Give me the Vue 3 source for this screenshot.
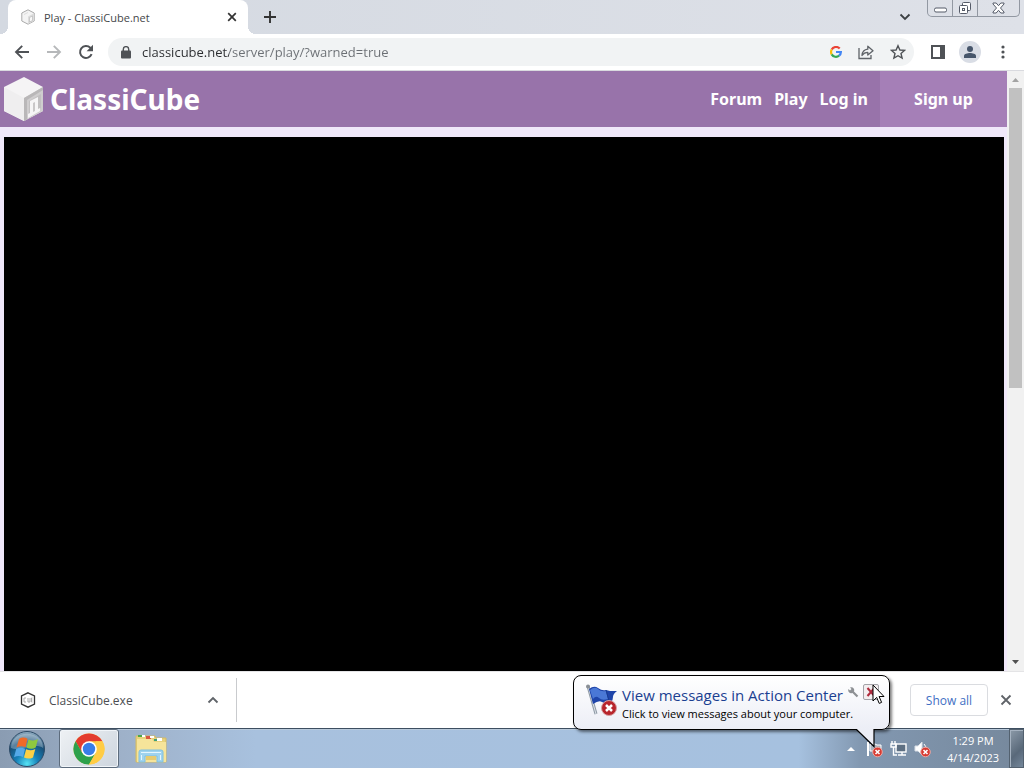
<template>
  <div class="desktop">
    <div class="browser">
      <div class="tab-strip">
        <div class="tab">
          <svg class="tab-icon" width="16" height="16" viewBox="0 0 16 16">
            <path d="M8 .8 14.2 4v8L8 15.2 1.8 12V4z" fill="#f4f4f4" stroke="#aaa" />
            <path d="M8 7.5 14 4.3v7.5l-6 3.2z" fill="#dcdcdc" />
            <path d="M9.5 8.5 12.5 7v4.5L9.5 13z" fill="#f8f8f8" stroke="#bbb" stroke-width=".7" />
            <path d="M4 5.5 8 3.5" stroke="#ddd" />
          </svg>
          <span class="tab-title">Play - ClassiCube.net</span>
          <button class="icon-button tab-close" aria-label="Close tab">
            <svg width="10" height="10" viewBox="0 0 10 10">
              <path d="m1.2 1.2 7.6 7.6m0-7.6-7.6 7.6" stroke="#333" stroke-width="1.7" />
            </svg>
          </button>
        </div>
        <button class="icon-button new-tab" aria-label="New tab">
          <svg width="14" height="14" viewBox="0 0 14 14">
            <path d="M7 1v12M1 7h12" stroke="#333" stroke-width="1.9" />
          </svg>
        </button>
        <button class="icon-button tab-search" aria-label="Search tabs">
          <svg width="12" height="8" viewBox="0 0 12 8">
            <path d="m1.5 1.5 4.5 4.5 4.5-4.5" fill="none" stroke="#3c4043" stroke-width="1.8" />
          </svg>
        </button>
        <div class="window-controls">
          <button aria-label="Minimize">
            <svg width="13" height="6" viewBox="0 0 13 6">
              <rect x=".5" y="1" width="12" height="4" rx="1.5" fill="#fff" stroke="#555b68" />
            </svg>
          </button>
          <button aria-label="Restore">
            <svg width="14" height="14" viewBox="0 0 14 14" fill="#fff" stroke="#555b68">
              <rect x="4.5" y="1.5" width="8" height="8" rx="1" />
              <rect x="1.5" y="4.5" width="8" height="8" rx="1" />
              <rect x="4.5" y="7.5" width="2" height="2" />
            </svg>
          </button>
          <button class="window-close" aria-label="Close">
            <svg width="13" height="12" viewBox="0 0 13 12">
              <path
                d="M1 1h3.2l2.3 2.7L8.8 1H12v1L8.5 6l3.5 4v1H8.8L6.5 8.3 4.2 11H1v-1l3.5-4L1 2z"
                fill="#fff"
                stroke="#555b68"
              />
            </svg>
          </button>
        </div>
      </div>

      <div class="toolbar">
        <button class="icon-button nav-button" aria-label="Back">
          <svg width="16" height="16" viewBox="0 0 16 16" fill="none" stroke="#4f5256" stroke-width="1.9">
            <path d="M15 8H2M8.2 1.8 2 8l6.2 6.2" />
          </svg>
        </button>
        <button class="icon-button nav-button" aria-label="Forward">
          <svg width="16" height="16" viewBox="0 0 16 16" fill="none" stroke="#b6b8ba" stroke-width="1.9">
            <path d="M1 8h13M7.8 1.8 14 8l-6.2 6.2" />
          </svg>
        </button>
        <button class="icon-button nav-button" aria-label="Reload">
          <svg width="16" height="16" viewBox="0 0 16 16">
            <path d="M13.6 10.2A6 6 0 1 1 12.3 3.7L14 5.4" fill="none" stroke="#4f5256" stroke-width="2" />
            <path d="M15 .8v6.4H8.6z" fill="#4f5256" />
          </svg>
        </button>
        <div class="omnibox">
          <svg width="10" height="13" viewBox="0 0 10 13">
            <rect y="4.5" width="10" height="8" rx="1" fill="#4f5256" />
            <path d="M2.3 5V3.3a2.7 2.7 0 0 1 5.4 0V5" fill="none" stroke="#4f5256" stroke-width="1.4" />
          </svg>
          <input v-model="url" class="url" type="text" aria-label="Address" spellcheck="false" />
          <button class="icon-button" aria-label="Google">
            <svg width="12" height="12" viewBox="0 0 12 12" fill="none" stroke-width="2.2">
              <path d="M9.7 2.6A4.9 4.9 0 0 0 1.7 3.6" stroke="#ea4335" />
              <path d="M1.7 3.6a4.9 4.9 0 0 0 0 4.8" stroke="#fbbc05" />
              <path d="M1.7 8.4a4.9 4.9 0 0 0 7.4 1.3" stroke="#34a853" />
              <path d="M6 6h4.9a4.9 4.9 0 0 1-1.8 3.7" stroke="#4285f4" />
            </svg>
          </button>
          <button class="icon-button" aria-label="Share this page">
            <svg width="16" height="16" viewBox="0 0 16 16" fill="none" stroke="#5f6368" stroke-width="1.3">
              <path d="M1 4v10.5h12V11" />
              <path d="M4 11.5C4.3 7.5 6.5 5.5 9.8 5.2v-3L15 6.7 9.800 11V8.300C7.200 8.300 5.500 9.200 4 11.500z" stroke-linejoin="round" />
            </svg>
          </button>
          <button class="icon-button" aria-label="Bookmark this tab">
            <svg width="16" height="16" viewBox="0 0 16 16">
              <path
                d="m8 1.7 1.9 4.3 4.6.4-3.500 3.100 1.100 4.600L8 11.700l-4.100 2.400L5 9.500 1.500 6.400l4.600-.4z"
                fill="none"
                stroke="#4f5256"
                stroke-width="1.4"
              />
            </svg>
          </button>
        </div>
        <button class="icon-button side-panel" aria-label="Side panel">
          <svg width="14" height="14" viewBox="0 0 14 14">
            <rect x="1" y="1" width="12" height="12" fill="none" stroke="#4f5256" stroke-width="2" />
            <path d="M9 1h4v12H9z" fill="#4f5256" />
          </svg>
        </button>
        <button class="icon-button avatar" aria-label="Profile">
          <svg width="12" height="12" viewBox="0 0 12 12" fill="#47566b">
            <circle cx="6" cy="3" r="3" />
            <path d="M0 12V9.8C0 8 3.5 7 6 7s6 1 6 2.8V12z" />
          </svg>
        </button>
        <button class="icon-button menu-button" aria-label="Menu">
          <svg width="4" height="14" viewBox="0 0 4 14" fill="#4f5256">
            <circle cx="2" cy="2" r="1.6" />
            <circle cx="2" cy="7" r="1.6" />
            <circle cx="2" cy="12" r="1.6" />
          </svg>
        </button>
      </div>

      <div class="viewport">
        <div class="page">
          <header class="site-header">
            <a href="#" class="brand">
              <svg width="40" height="46" viewBox="0 0 40 46">
                <path d="M20 1 39 11v24L20 45 0 35V11z" fill="#f5f4f5" />
                <path d="M0 11 20 22v23L0 35z" fill="#efeeef" />
                <path d="M20 22 39 11v24L20 45z" fill="#cfcdce" />
                <path d="m20 22 19-11v3L23 24v19.500l-3 1.500z" fill="#b9b7b8" />
                <path d="m25 25 12-7v14l-12 8z" fill="#c2c0c1" />
                <path d="m26 25 8-4v12l2-1v3l-12 7v-4l2-1z" fill="#f6f5f6" />
                <path d="m29 27 2-1v9l-2 1z" fill="#c9c7c8" />
              </svg>
              <span>ClassiCube</span>
            </a>
            <nav class="site-nav">
              <a v-for="link in links" :key="link" href="#">{{ link }}</a>
            </nav>
            <a href="#" class="sign-up">Sign up</a>
          </header>
          <div class="game"></div>
        </div>
        <div class="scrollbar">
          <svg class="arrow" width="17" height="17" viewBox="0 0 17 17">
            <path d="m5 11 3.5-4 3.5 4z" fill="#a3a3a3" />
          </svg>
          <div class="track"><div class="thumb"></div></div>
          <svg class="arrow" width="17" height="17" viewBox="0 0 17 17">
            <path d="m5 6 3.5 4L12 6z" fill="#505050" />
          </svg>
        </div>
      </div>

      <div class="downloads">
        <div class="download-item">
          <svg width="16" height="16" viewBox="0 0 16 16">
            <path d="M8 .8 14.5 4v8L8 15.200 1.500 12V4z" fill="#fff" stroke="#333" stroke-width="1.3" />
            <path d="M6 6H4v4h2M8 6v4h2V6M12.500 6h-1v4h1M11.500 8h1" fill="none" stroke="#aaa" />
          </svg>
          <span class="file-name">ClassiCube.exe</span>
          <button class="icon-button" aria-label="Download options">
            <svg width="12" height="8" viewBox="0 0 12 8">
              <path d="M1.5 6.5 6 2l4.5 4.5" fill="none" stroke="#5f6368" stroke-width="1.8" />
            </svg>
          </button>
        </div>
        <button class="show-all">Show all</button>
        <button class="icon-button close-downloads" aria-label="Close downloads">
          <svg width="12" height="12" viewBox="0 0 12 12">
            <path d="m1.5 1.5 9 9m0-9-9 9" stroke="#5f6368" stroke-width="1.8" />
          </svg>
        </button>
      </div>
    </div>

    <div class="taskbar">
      <button class="start" aria-label="Start">
        <svg width="38" height="38" viewBox="0 0 38 38">
          <defs>
            <radialGradient id="orb" cx=".5" cy=".92" r=".9">
              <stop offset="0" stop-color="#55e3f4" />
              <stop offset=".35" stop-color="#1681b9" />
              <stop offset=".7" stop-color="#195078" />
              <stop offset="1" stop-color="#8eabc0" />
            </radialGradient>
          </defs>
          <circle cx="19" cy="19" r="17.5" fill="url(#orb)" stroke="#2c4a66" />
          <path d="M3 18C3-1 35-1 35 18 27 12 11 22 3 18z" fill="#fff" opacity=".28" />
          <path d="M11 9c3-2 6-1.700 8.500-.3l-2 8.500c-3-1.400-6-1.300-9 .4z" fill="#ef6a28" />
          <path d="M20.500 9.500c3 1.500 6 1.300 9.500-.5l-2.300 8.500c-3 1.800-6 1.500-9.200 0z" fill="#8fc83e" />
          <path d="M8.200 19c3-1.700 6-1.600 8.900-.2l-2.100 8.200c-3-1.500-6-1.400-9 .3z" fill="#54a9e8" />
          <path d="M18.100 19.300c3.200 1.500 6.200 1.400 9.200-.2l-2.300 8.300c-3 1.600-6 1.500-9 .1z" fill="#fcd045" />
        </svg>
      </button>
      <button class="task active" aria-label="Google Chrome">
        <svg width="32" height="32" viewBox="0 0 32 32">
          <circle cx="16" cy="16" r="15.5" fill="#fc4" />
          <path d="M2.6 8.2A15.5 15.5 0 0 1 29.4 8.2H16L9.2 20z" fill="#e33b2e" />
          <path d="M2.6 8.2A15.5 15.5 0 0 0 16 31.5l6.8-11.700H9.200z" fill="#2da14c" />
          <path d="M29.4 8.2A15.5 15.5 0 0 1 16 31.5l6.800-11.700V8.200z" fill="#fc4" />
          <circle cx="16" cy="16" r="7.8" fill="#fff" />
          <circle cx="16" cy="16" r="6.2" fill="#387de8" />
        </svg>
      </button>
      <button class="task" aria-label="Windows Explorer">
        <svg width="32" height="30" viewBox="0 0 32 30">
          <path d="M1 2h19l1 2h10v24H1z" fill="#e8d27c" stroke="#d3bb66" />
          <path d="M3 1h5v2H3z" fill="#4da747" />
          <path d="M11 2h5v3h-5z" fill="#da5641" />
          <path d="M19 5h4v2h-4z" fill="#3fa078" />
          <path d="M7 1h3v2H7zM15 2h4v2h-4zM22 4h5v3h-5z" fill="#fff" />
          <path d="M2 5h15l2 3h12v20H2z" fill="#f6e49a" />
          <path d="M4 28V18q0-2 2-2h20q2 0 2 2v10h-6v-6H10v6z" fill="#9fd3ee" stroke="#7fbfe0" />
          <path d="M6 18h20v1H6zM6 21h1v5H6zM25 21h1v5h-1z" fill="#e4f6fd" />
          <path d="M11 22h10v4H11z" fill="#e6cb70" />
        </svg>
      </button>
      <div class="tray">
        <button class="tray-button" aria-label="Show hidden icons">
          <svg width="8" height="5" viewBox="0 0 8 5"><path d="m0 5 4-4 4 4z" fill="#fff" /></svg>
        </button>
        <button class="tray-button" aria-label="Action Center">
          <svg width="18" height="18" viewBox="0 0 18 18">
            <path d="M2 2v14" stroke="#fff" stroke-width="2" />
            <path d="M4 4h5l2 1h4v6H4z" fill="#a9b3bf" stroke="#fff" />
            <circle cx="11.5" cy="12" r="4.8" fill="#d83b32" stroke="#eca9a4" />
            <path d="m9.500 10 4 4m0-4-4 4" stroke="#fff" stroke-width="1.6" />
          </svg>
        </button>
        <button class="tray-button" aria-label="Network">
          <svg width="18" height="18" viewBox="0 0 18 18" fill="none" stroke="#fff" stroke-width="1.4">
            <rect x="6" y="4" width="10" height="8" fill="#5d6f82" />
            <path d="M8 15h8M12 12v3M2 1v3M5 1v3M1 4h5v3H1zM3.500 7v8H7" />
          </svg>
        </button>
        <button class="tray-button" aria-label="Volume">
          <svg width="18" height="18" viewBox="0 0 18 18">
            <path d="M1 6h3l4-4v13l-4-4H1z" fill="#fff" stroke="#d8dee6" />
            <path d="M10 4q2 2 2 5" fill="none" stroke="#fff" />
            <circle cx="11.5" cy="12" r="4.8" fill="#d83b32" stroke="#eca9a4" />
            <path d="m9.500 10 4 4m0-4-4 4" stroke="#fff" stroke-width="1.6" />
          </svg>
        </button>
        <div class="clock">
          <span>1:29 PM</span>
          <span>4/14/2023</span>
        </div>
        <button class="show-desktop" aria-label="Show desktop"></button>
      </div>
    </div>

    <div class="balloon">
      <svg class="flag" width="34" height="34" viewBox="0 0 34 34">
        <path d="m2 2 8 28" stroke="#8e99a5" stroke-width="3" />
        <path d="m2 2 8 28" stroke="#dce2e8" />
        <circle cx="2" cy="2.500" r="2" fill="#8a8f95" />
        <path d="M3 5q5-4 9-1t8 2l4 1 7 0q-4 3-4 6t-2 6q-6 1-9-1t-9 2z" fill="#1f45aa" />
        <path d="M4 6q5-4 8-1t8 2l2 8q-6 2-9-1t-6 1z" fill="#4a78d6" />
        <path d="m20 6 3 11" stroke="#183b91" />
        <circle cx="23" cy="24" r="7.5" fill="#b8252c" stroke="#d5a0a3" />
        <path d="m20 21 6 6m0-6-6 6" stroke="#fff" stroke-width="2.5" />
      </svg>
      <div class="balloon-text">
        <a href="#" class="balloon-title">View messages in Action Center</a>
        <span class="balloon-body">Click to view messages about your computer.</span>
      </div>
      <button class="icon-button balloon-options" aria-label="Options">
        <svg width="12" height="12" viewBox="0 0 12 12">
          <path d="M5 5 10.5 10.5" stroke="#8d9094" stroke-width="2.2" />
          <path d="M3 1.5 4.5 3 3 4.5 1.5 3A3 3 0 1 0 3 1.5z" fill="#8d9094" />
        </svg>
      </button>
      <button class="icon-button balloon-close" aria-label="Dismiss">
        <svg width="10" height="10" viewBox="0 0 10 10">
          <path d="m1.5 1 7 8m0-8-7 8" stroke="#b02a3c" stroke-width="2" />
        </svg>
      </button>
      <svg class="balloon-tail" width="22" height="19" viewBox="0 0 22 19">
        <path d="M1 0 19 17V0z" fill="#eceef6" />
        <path d="M1 0 19 17.500V0" fill="none" stroke="#000" stroke-width="1.2" />
      </svg>
      <svg class="cursor" width="13" height="21" viewBox="0 0 13 21">
        <path d="M1 1v16l3.700-3.600 2.500 6 2.400-1-2.500-5.900H12z" fill="#fff" stroke="#000" />
      </svg>
    </div>
  </div>
</template>

<script setup>
import { ref } from 'vue'

const url = ref('classicube.net/server/play/?warned=true')
const links = ['Forum', 'Play', 'Log in']
</script>

<style>
body {
  margin: 0;
  overflow: hidden;
}
</style>

<style scoped>
* {
  box-sizing: border-box;
}

.desktop {
  position: relative;
  display: flex;
  flex-direction: column;
  height: 100vh;
  overflow: hidden;
  font-family: 'Open Sans', 'Noto Sans', sans-serif;
  font-size: 12px;
}

svg {
  display: block;
  flex: none;
}

a {
  text-decoration: none;
}

button {
  font-family: inherit;
}

.icon-button {
  display: flex;
  align-items: center;
  justify-content: center;
  padding: 0;
  border: none;
  background: none;
}

.browser {
  flex: 1;
  min-height: 0;
  display: flex;
  flex-direction: column;
}

.tab-strip {
  display: flex;
  flex: none;
  height: 34px;
  padding: 0 4px 0 8px;
  background: linear-gradient(90deg, #d4d9e1, #dee1e8);
}

.tab {
  position: relative;
  display: flex;
  align-items: center;
  width: 240px;
  padding: 0 10px 0 12px;
  background: #fff;
  border-radius: 8px 8px 0 0;
}

.tab::before,
.tab::after {
  content: '';
  position: absolute;
  bottom: 0;
  width: 8px;
  height: 8px;
}

.tab::before {
  right: 100%;
  background: radial-gradient(circle at 0 0, transparent 8px, #fff 8px);
}

.tab::after {
  left: 100%;
  background: radial-gradient(circle at 100% 0, transparent 8px, #fff 8px);
}

.tab-title {
  flex: 1;
  margin-left: 8px;
  font-size: 11px;
  color: #45474a;
  white-space: nowrap;
}

.tab-close {
  width: 12px;
}

.new-tab {
  width: 14px;
  margin-left: 15px;
}

.tab-search {
  width: 12px;
  margin-left: auto;
}

.window-controls {
  display: flex;
  height: 17px;
  margin-left: 16px;
  border: 1px solid #9298a2;
  border-top: none;
  border-radius: 0 0 5px 5px;
}

.window-controls button {
  display: flex;
  align-items: center;
  justify-content: center;
  width: 25px;
  padding: 0;
  border: none;
  border-right: 1px solid #9298a2;
  background: none;
}

.window-controls button:first-child {
  align-items: flex-end;
  padding-bottom: 3px;
}

.window-controls .window-close {
  width: 41px;
  border-right: none;
}

.toolbar {
  display: flex;
  align-items: center;
  flex: none;
  height: 37px;
  padding: 0 13px 0 14px;
  background: #fff;
  border-bottom: 1px solid #d9dadf;
}

.nav-button {
  width: 16px;
  margin-right: 16px;
}

.omnibox {
  flex: 1;
  display: flex;
  align-items: center;
  gap: 16px;
  height: 28px;
  margin-right: 17px;
  margin-left: -2px;
  padding: 0 8px 0 13px;
  background: #f1f3f4;
  border-radius: 14px;
}

/* host name dark, path grey */
.url {
  flex: 1;
  min-width: 0;
  margin-left: -5px;
  padding: 0;
  border: none;
  outline: none;
  font-family: inherit;
  font-size: 13px;
  color: #303236;
  background: linear-gradient(90deg, #2b2d30 87px, #6b6f74 87px);
  background-clip: text;
  -webkit-background-clip: text;
  -webkit-text-fill-color: transparent;
}

.avatar {
  width: 22px;
  height: 22px;
  margin: 0 20px 0 14px;
  border-radius: 50%;
  background: #d9dde5;
}

.menu-button {
  width: 4px;
  margin-right: 6px;
}

.viewport {
  flex: 1;
  min-height: 0;
  display: flex;
}

.page {
  flex: 1;
  display: flex;
  flex-direction: column;
  gap: 10px;
  background: #f0e8fa;
}

.site-header {
  display: flex;
  align-items: center;
  flex: none;
  height: 56px;
  padding-left: 4px;
  background: #9873aa;
  font-family: 'Noto Sans', sans-serif;
  font-size: 16px;
  font-weight: 700;
}

.site-header a {
  color: #fff;
}

.brand {
  display: flex;
  align-items: center;
  gap: 6px;
  font-size: 28px;
  line-height: 36px;
}

.site-nav {
  display: flex;
  gap: 12px;
  margin-left: auto;
  padding-right: 12px;
}

.sign-up {
  display: flex;
  align-items: center;
  justify-content: center;
  align-self: stretch;
  width: 127px;
  background: #a57fb7;
}

.game {
  flex: 1;
  margin: 0 3px 0 4px;
  background: #000;
}

.scrollbar {
  display: flex;
  flex-direction: column;
  width: 17px;
  background: #f1f1f1;
}

.track {
  flex: 1;
  padding: 0 2px;
}

.thumb {
  height: 53%;
  background: #c1c1c1;
}

.downloads {
  display: flex;
  align-items: center;
  flex: none;
  height: 57px;
  padding-right: 12px;
  background: #fff;
  border-top: 1px solid #e4e4e6;
}

.download-item {
  display: flex;
  align-items: center;
  width: 237px;
  height: 44px;
  padding: 0 17px 0 20px;
  border-right: 1px solid #c9cbce;
}

.file-name {
  flex: 1;
  margin-left: 13px;
  color: #4c4e52;
}

.show-all {
  width: 78px;
  height: 32px;
  margin-left: auto;
  padding: 0;
  border: 1px solid #dadce0;
  border-radius: 4px;
  background: #fff;
  font-size: 12px;
  color: #3f6fc4;
}

.close-downloads {
  width: 12px;
  margin-left: 12px;
}

.taskbar {
  display: flex;
  flex: none;
  height: 40px;
  padding-left: 8px;
  border-top: 1px solid #3d4e60;
  box-shadow: inset 0 1px 0 #b9cadb;
  background: linear-gradient(90deg, #8a9cb2, #9eb1c9 12%, #a8c1de 25%, #a6c1df 78%, #8298b1 84%, #76889c);
}

.start,
.task,
.tray-button,
.show-desktop {
  display: flex;
  align-items: center;
  justify-content: center;
  padding: 0;
  border: none;
  background: none;
}

.start {
  width: 38px;
  margin-right: 13px;
}

.task {
  width: 60px;
  margin-right: 2px;
}

.task.active {
  border: 1px solid #5d6c7d;
  border-radius: 3px;
  box-shadow: inset 0 0 0 1px #f1f5f9;
  background: linear-gradient(135deg, #eef1f4, #cdd5de);
}

.tray {
  display: flex;
  align-items: center;
  gap: 6px;
  margin-left: auto;
}

.tray-button {
  width: 18px;
  height: 18px;
}

.clock {
  display: flex;
  flex-direction: column;
  align-items: center;
  width: 66px;
  margin-left: 2px;
  font-size: 11px;
  line-height: 17px;
  color: #fff;
}

.show-desktop {
  align-self: stretch;
  width: 15px;
  margin-left: -3px;
  border: 1px solid #53616f;
  box-shadow: inset 1px 1px 0 #a5b2c0;
  background: linear-gradient(135deg, #8c9aa8, #59697a 60%, #74879a);
}

.balloon {
  position: absolute;
  right: 134px;
  bottom: 38px;
  display: flex;
  width: 317px;
  height: 55px;
  padding: 8px 10px 0 12px;
  border: 1px solid #000;
  border-radius: 8px;
  background: linear-gradient(#fff, #eceef6);
  box-shadow: 2px 2px 3px rgba(0, 0, 0, 0.5);
}

.balloon-text {
  flex: 1;
  min-width: 0;
  display: flex;
  flex-direction: column;
  margin-left: 2px;
  white-space: nowrap;
}

.balloon-title {
  font-size: 15px;
  line-height: 22px;
  color: #1b3f91;
}

.balloon-body {
  font-size: 11px;
  line-height: 16px;
  color: #000;
}

.balloon-options {
  width: 12px;
  height: 16px;
  margin-right: 4px;
}

.balloon-close {
  width: 16px;
  height: 16px;
  border: 1px solid #a3a3a8;
  border-radius: 2px;
  background: #f3eef0;
}

.balloon-tail {
  position: absolute;
  top: 53px;
  right: 12px;
}

.cursor {
  position: absolute;
  top: 8px;
  right: 4px;
}
</style>
